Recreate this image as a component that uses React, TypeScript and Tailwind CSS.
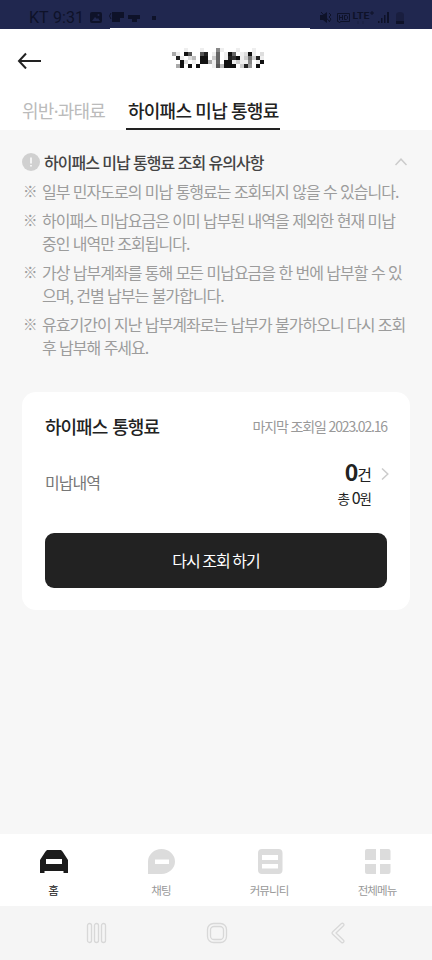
import type { ReactNode } from "react"

const notices = [
  ["일부 민자도로의 미납 통행료는 조회되지 않을 수 있습니다."],
  ["하이패스 미납요금은 이미 납부된 내역을 제외한 현재 미납", "중인 내역만 조회됩니다."],
  ["가상 납부계좌를 통해 모든 미납요금을 한 번에 납부할 수 있", "으며, 건별 납부는 불가합니다."],
  ["유효기간이 지난 납부계좌로는 납부가 불가하오니 다시 조회", "후 납부해 주세요."],
]

// masked title, one hex digit per cell (0 = black, f = white)
const mask = [
  "fffefffefff8efffefffeff",
  "aef15ff52fe6fe16fed1efd",
  "f2efdbf11fc6fe231ec7c2e",
  "ff1dfef11ae6f11ecee8fe1",
  "fa1f1f1fffe5b111fc29f1f",
]

function Mosaic() {
  return (
    <svg width="92" height="20" shapeRendering="crispEdges" aria-hidden="true">
      {mask.map((row, y) =>
        row.split("").map((v, x) => (
          <rect key={`${x}-${y}`} x={x * 4} y={y * 4} width="4" height="4" fill={`#${v}${v}${v}`} />
        )),
      )}
    </svg>
  )
}

function StatusBar() {
  return (
    <div className="relative flex h-[29px] items-center justify-between bg-[#20274f] pt-[6px] pr-[28px] pl-[29px] tracking-normal text-[#0e1229]">
      <div className="flex items-center">
        <span className="w-[61px] font-[Roboto] text-[16px] leading-[18px] whitespace-nowrap">KT 9:31</span>
        <svg width="70" height="13" viewBox="0 0 70 13" fill="currentColor">
          <rect y="1" width="12" height="11" rx="2" />
          <path d="M2 10l3-4 2 2 1-1 2 3z" fill="#20274f" />
          <circle cx="8.5" cy="4" r="1" fill="#20274f" />
          <path d="M22 1h12v6h-4v4h-8zM38 4h12v4h-3v3h-5V8h-4zM62 5h4v4h-4z" />
          <path d="M21 2q-3 3 0 6" fill="none" stroke="currentColor" />
        </svg>
      </div>
      <svg width="84" height="15" viewBox="0 0 84 15" fill="currentColor">
        <path d="M0 5h3l4-3v11l-4-3H0z" />
        <path d="M1 2l9 10M9 3l2 2-2 2 2 2-2 3" fill="none" stroke="currentColor" />
        <path d="M17.5 3.5h12v8h-9l-1 1.500-1-1.500h-1z" fill="none" stroke="currentColor" />
        <path d="M19.500 5v5M22.500 5v5M19.500 7.500h3M24.500 5.500h2l1 1v2l-1 1h-2z" fill="none" stroke="currentColor" />
        <text x="32.500" y="9" fontFamily="Roboto" fontSize="9.500" fontWeight="700" textLength="17" lengthAdjust="spacingAndGlyphs">LTE</text>
        <path d="M50 3h4M52 1v4" stroke="currentColor" />
        <path d="M38 11v3M43 11v3" stroke="currentColor" opacity=".35" />
        <path d="M58 11h1.500v2H58zM61 8h1.500v5H61zM64 5h1.500v8H64zM67 2h2v11h-2z" />
        <path d="M76 5q0-3 4-3t4 3v6h-8z" opacity=".4" />
        <path d="M76 11h8v3h-8z" />
      </svg>
      <div className="absolute bottom-0 left-[110px] h-px w-[200px] bg-white" />
    </div>
  )
}

function NavItem({ label, active, children }: { label: string; active?: boolean; children: ReactNode }) {
  return (
    <button className={`flex flex-1 flex-col items-center pt-[14px] ${active ? "text-[#1c1c1c]" : "text-[#dcdcdc]"}`}>
      <svg width="28" height="28" viewBox="0 0 28 28" fill="currentColor">
        {children}
      </svg>
      <span className={`mt-[6px] pr-[2px] text-[11.5px] leading-[16px] tracking-[-0.9px] ${active ? "text-[#222]" : "text-[#999]"}`}>{label}</span>
    </button>
  )
}

export default function App() {
  return (
    <div className="flex h-[960px] w-[432px] flex-col overflow-hidden bg-[#f7f7f7] font-['Noto_Sans_CJK_KR',sans-serif] tracking-[-0.0625em] text-[#222] [word-spacing:0.8px]">
      <StatusBar />

      <header className="flex h-[62px] shrink-0 items-center bg-white pl-[17px]">
        <svg width="24" height="18" viewBox="0 0 24 18" fill="none" stroke="#222" strokeWidth="2">
          <path d="M24 10H2M9 2.500L2 10l7 7.500" />
        </svg>
        <div className="ml-[131px] pb-[4px]">
          <Mosaic />
        </div>
      </header>

      <nav className="flex h-[39px] shrink-0 gap-[21px] bg-white pl-[22px] text-[18px] leading-[38px] tracking-[-0.75px]">
        <span className="w-[83px] whitespace-nowrap text-[#bbb]">
          위반<span className="font-['Noto_Sans']">·</span>과태료
        </span>
        <span className="w-[154px] border-b-2 border-[#222] pl-[2px] font-medium whitespace-nowrap">하이패스 미납 통행료</span>
      </nav>

      <main className="flex-1 px-[22px] pt-[20px]">
        <section>
          <div className="flex h-[23px] items-center">
            <svg width="18" height="18" viewBox="0 0 18 18" className="mr-1">
              <circle cx="9" cy="9" r="9" fill="#d0d0d0" />
              <path d="M9 4.500v6M9 12v1.600" stroke="#fff" strokeWidth="1.500" />
            </svg>
            <h2 className="text-[16px] font-medium text-[#444]">하이패스 미납 통행료 조회 유의사항</h2>
            <svg width="12" height="8" viewBox="0 0 12 8" fill="none" stroke="#ccc" strokeWidth="1.500" className="mr-[3px] ml-auto">
              <path d="M.5 7L6 1.200 11.500 7" />
            </svg>
          </div>
          <ul className="mt-[6.5px] flex flex-col gap-[7px] text-[16px] leading-[22.5px] text-[#9c9c9c]">
            {notices.map((lines) => (
              <li key={lines[0]} className="flex">
                <span className="w-[20px] pl-px text-[14.5px]">※</span>
                <div>
                  {lines.map((line) => (
                    <p key={line} className="whitespace-nowrap">{line}</p>
                  ))}
                </div>
              </li>
            ))}
          </ul>
        </section>

        <section className="mt-[33.5px] h-[218px] w-[388px] rounded-[14px] bg-white px-[23px] pt-[22px]">
          <div className="flex h-[26px] items-center justify-between">
            <h2 className="text-[18px] font-medium tracking-[-1px] [word-spacing:2px]">하이패스 통행료</h2>
            <span className="text-[14px] tracking-[-1.15px] text-[#999]">마지막 조회일 2023.02.16</span>
          </div>
          <div className="mt-[20px] flex h-[46px] items-center">
            <span className="pb-[2px] text-[16px] text-[#777]">미납내역</span>
            <div className="ml-auto flex flex-col items-end">
              <p className="pt-[2px] text-[16px] leading-[26px]">
                <b className="text-[23px] font-bold">0</b>건
              </p>
              <p className="text-[13.5px] leading-[21px]">
                총 <span className="text-[16px]">0</span>원
              </p>
            </div>
            <svg width="8" height="12" viewBox="0 0 8 12" fill="none" stroke="#ccc" strokeWidth="1.500" className="mr-[-2px] mb-[18px] ml-[10px]">
              <path d="M1 .5L6.800 6 1 11.500" />
            </svg>
          </div>
          <button className="mt-[27px] h-[55px] w-[342px] rounded-[9px] bg-[#222] text-[16px] text-white">다시 조회 하기</button>
        </section>
      </main>

      <nav className="flex h-[72px] shrink-0 bg-white">
        <NavItem label="홈" active>
          <path fillRule="evenodd" d="M7 2h14l1.500 1.500L28 12v13h-4.500v-2h-19v2H0V12l5.500-8.500zM6 11v5h16v-5z" />
        </NavItem>
        <NavItem label="채팅">
          <path fillRule="evenodd" d="M0 26V13.500A13.500 12.500 0 0 1 27 13.500A13.500 12.500 0 0 1 13.500 26zM7 11.500v4.500h14v-4.500z" />
        </NavItem>
        <NavItem label="커뮤니티">
          <path fillRule="evenodd" d="M6 1h16.500q4 0 4 4v17q0 4-4 4H6q-4 0-4-4V5q0-4 4-4zM6 7v5h16V7zM6 16v4.500h16v-4.500z" />
        </NavItem>
        <NavItem label="전체메뉴">
          <path d="M3 1h9v11H1V3q0-2 2-2zM16 1h8.500q2 0 2 2v9H16zM1 16h11v10H3q-2 0-2-2zM16 16h10.500v8q0 2-2 2H16z" />
        </NavItem>
      </nav>

      <footer className="flex h-[54px] shrink-0 items-center bg-[#f5f5f5] pl-[86px]">
        <svg width="21" height="22" viewBox="0 0 21 22" fill="none" stroke="#d8d8d8" strokeWidth="1.300">
          <rect x="1.500" y="1.500" width="4" height="19" rx="2" />
          <rect x="8.500" y="1.500" width="4" height="19" rx="2" />
          <rect x="15.500" y="1.500" width="4" height="19" rx="2" />
        </svg>
        <svg width="22" height="22" viewBox="0 0 22 22" fill="none" stroke="#d8d8d8" strokeWidth="1.300" className="ml-[99px]">
          <rect x="1.500" y="1.500" width="19" height="19" rx="6" />
          <rect x="4.500" y="4.500" width="13" height="13" rx="3.500" />
        </svg>
        <svg width="15" height="22" viewBox="0 0 15 22" fill="none" stroke="#d8d8d8" strokeWidth="1.300" strokeLinejoin="round" className="ml-[103px]">
          <path d="M10.500 1.600L1.500 10a1.300 1.300 0 0 0 0 2l9 8.400q1 .8 2-.1t0-2L5 11l7.500-7.300q1-1.100 0-2t-2-.1z" />
        </svg>
      </footer>
    </div>
  )
}
